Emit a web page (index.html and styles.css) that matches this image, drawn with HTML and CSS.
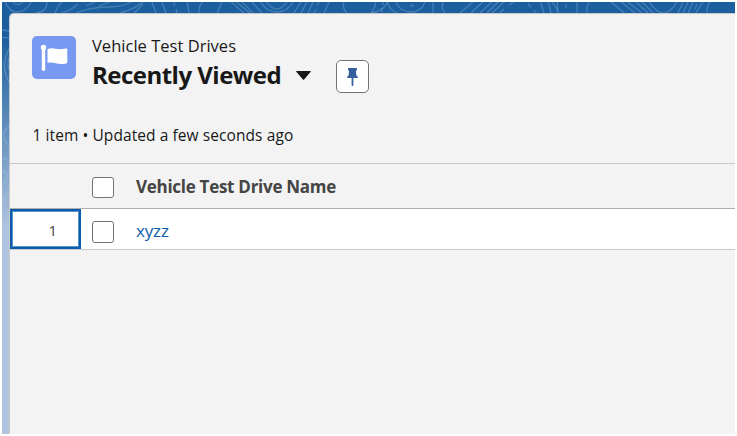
FILE: index.html
```html
<!DOCTYPE html>
<html lang="en">
<head>
<meta charset="utf-8">
<title>Vehicle Test Drives</title>
<link rel="stylesheet" href="styles.css">
</head>
<body>
<div class="app">
  <svg class="contours" width="733" height="432" viewBox="2 2 733 432" aria-hidden="true">
    <path d="M5 0C8 16 26 16 32 0M12 0q5 9 13 0M36 13Q48 12 47 0M55 13Q58 4 65 0M62 13Q72 10 78 4M86 6l9-4M99 6l11-4M76 13q15-6 32-6t26-7M120 13Q136 9 145 0M134 13l9-9M151 0l5 13M161 0l5 13M173 0l2 6M176 9l1 4M187 0l2 13"/>
    <path d="M204 0q-6 6-5 13M223 0l-6 13M229 0l15 13M234 0l16 13M240 0l13 13M250 0l12 13M259 0q8 13 19 12T294 0M265 0q12 18 23 0M302 0l-8 13M308 0l-7 13M314 0l-6 13M320 0l-3 6M316 9l-2 4M330 0l-6 13M344 0q-2 9 3 13M389 0q-6 12-18 13"/>
    <path d="M375 0q1 8-4 13M383 0v5M382 8v4M387 0q1 9 10 13M396 0c2 16 28 16 29 0M410 6l4-1M433 0v13M444 0q-4 8 1 13M475 0l-15 13M485 0l-14 13M494 0l-14 13M500 0l-13 13M506 0l-14 13M516 0l-7 5M504 9l-4 4M528 4l3 3M534 10l2 3M540 0l4 13M548 0l3 13M557 0l1 13"/>
    <path d="M551 0l7 11M566 4v4M577 0v13M590 0q-4 6-3 13M609 0l15 13M619 0l16 13M625 0l17 13M634 0l14 13M640 0l13 13M648 0q16 26 30 0M684 0l-6 13M689 0l-6 13M694 0l-6 13M697 4l-2 5M704 0l-8 13M712 0q-6 5-5 13"/>
    <path d="M2 30q8 0 9 4M2 38q6-2 9 3M10 47Q-1 67 10 83M10 55q-4 9 0 17M10 125q-13 12 0 21M2 158l8 3M2 170q9 4 4 10l-4 2M10 190q-7 7-8 15M10 207l-6 17M2 239q5-3 8-2"/>
  </svg>
  <main class="card">
    <header class="heading">
      <span class="object-icon">
        <svg width="44" height="43" viewBox="0 0 44 43"><rect x="9.800" y="10" width="3.400" height="25" rx="1.700"/><circle cx="11.500" cy="11.500" r="2.700"/><path d="M15.500 13.200c6-2.700 9 1.800 18.200-.6q1.600-.5 1.600 1v12.500q0 1-1.200 1.300c-8.500 2-12-2-18.600-.5z"/></svg>
      </span>
      <div class="titles">
        <div class="object-name"><span>Vehicle Test Drives</span></div>
        <div class="view-row">
          <h1>Recently Viewed</h1>
          <svg class="caret" width="15" height="9" viewBox="0 0 15 9"><path d="M.6 0h13.800q.8 0 .3.700L8.100 8.500q-.6.600-1.200 0L.3.700Q-.2 0 .6 0z"/></svg>
          <button class="pin" aria-label="Pin list"><svg width="11" height="18" viewBox="0 0 11 18"><path d="M1.500 0h8q.5 0 .5.600v1.200q0 .6-.6.600H9l.3 4.800q1.500.9 1.500 2.100 0 .8-.6.800H6.400v7.200q0 .7-.9.700t-.9-.7V10.100H.7q-.6 0-.6-.8 0-1.200 1.600-2.100L2 2.400h-.5Q1 2.400 1 1.800V.6Q1 0 1.500 0z"/></svg></button>
        </div>
      </div>
    </header>
    <p class="summary"><span>1 item • Updated a few seconds ago</span></p>
    <div class="row head">
      <div class="number"></div>
      <span class="box"></span>
      <strong class="column-name">Vehicle Test Drive Name</strong>
    </div>
    <div class="row record">
      <div class="number focused">1</div>
      <span class="box"></span>
      <a class="record-link">xyzz</a>
    </div>
  </main>
</div>
</body>
</html>
```
FILE: styles.css
```css
* { box-sizing: border-box; }
body { margin: 0; padding: 2px; background: #fff; font-family: "Open Sans", "Noto Sans", sans-serif; color: #181818; }
.app {
  position: relative;
  width: 733px;
  height: 432px;
  padding: 11px 0 0 7px;
  overflow: hidden;
  background: linear-gradient(#1b5f9f 0, #1b5f9f 36px, #b0c4df 226px, #b0c4df 100%);
}
.contours { position: absolute; left: 0; top: 0; fill: none; stroke: #a9c9e8; stroke-opacity: .3; stroke-width: 1.3; }
.card {
  position: relative;
  height: 421px;
  border: solid #c9c9c9;
  border-width: 1px 0 0 1px;
  border-radius: 5px 0 0 0;
  background: #f3f3f3;
  white-space: nowrap;
}
.heading { display: flex; height: 99px; padding: 22px 0 0 22px; }
.object-icon { width: 44px; height: 43px; border-radius: 5px; background: #7799f1; }
.object-icon svg { display: block; fill: #fff; }
.titles { margin-left: 16px; }
.object-name { height: 20px; font-size: 16.5px; line-height: 20px; letter-spacing: .02px; }
.view-row { display: flex; height: 40px; align-items: flex-start; }
h1 { width: 204px; margin: 3px 0 0; font-size: 24px; line-height: 32px; letter-spacing: -.52px; }
.caret { margin-top: 15px; fill: #181818; }
.pin { display: flex; width: 33px; height: 33px; margin: 4px 0 0 25px; padding: 0; align-items: center; justify-content: center; border: 1px solid #747474; border-radius: 5px; background: #fff; }
.pin svg { fill: #355f9d; }
.summary { height: 50px; margin: 0; padding: 12px 0 0 22.5px; font-size: 15.5px; line-height: 20px; letter-spacing: .08px; }
.row { display: flex; align-items: center; border-bottom: 1px solid #c9c9c9; }
.head { height: 46px; border-top: 1px solid #c9c9c9; border-bottom-color: #aeaeae; }
.record { height: 41px; background: #fff; }
.number { width: 71px; margin-right: 11px; }
.focused { height: 40px; padding: 0 22px 0 0; border: 2px solid #0b5cab; box-shadow: inset 0 0 0 1px #5793c9; font-size: 15px; line-height: 38px; text-align: right; color: #444; }
.box { width: 22px; height: 21px; border: 1px solid #747474; border-radius: 3px; background: #fff; }
.head .box { margin-top: 2px; }
.record .box { height: 22px; margin-top: 5px; }
.column-name, .record-link { margin-left: 22px; font-size: 17px; line-height: 24px; }
.column-name { margin-top: 2px; color: #444; letter-spacing: -.28px; }
.record-link { margin-top: 4px; color: #0b5cab; letter-spacing: -.15px; }
```
